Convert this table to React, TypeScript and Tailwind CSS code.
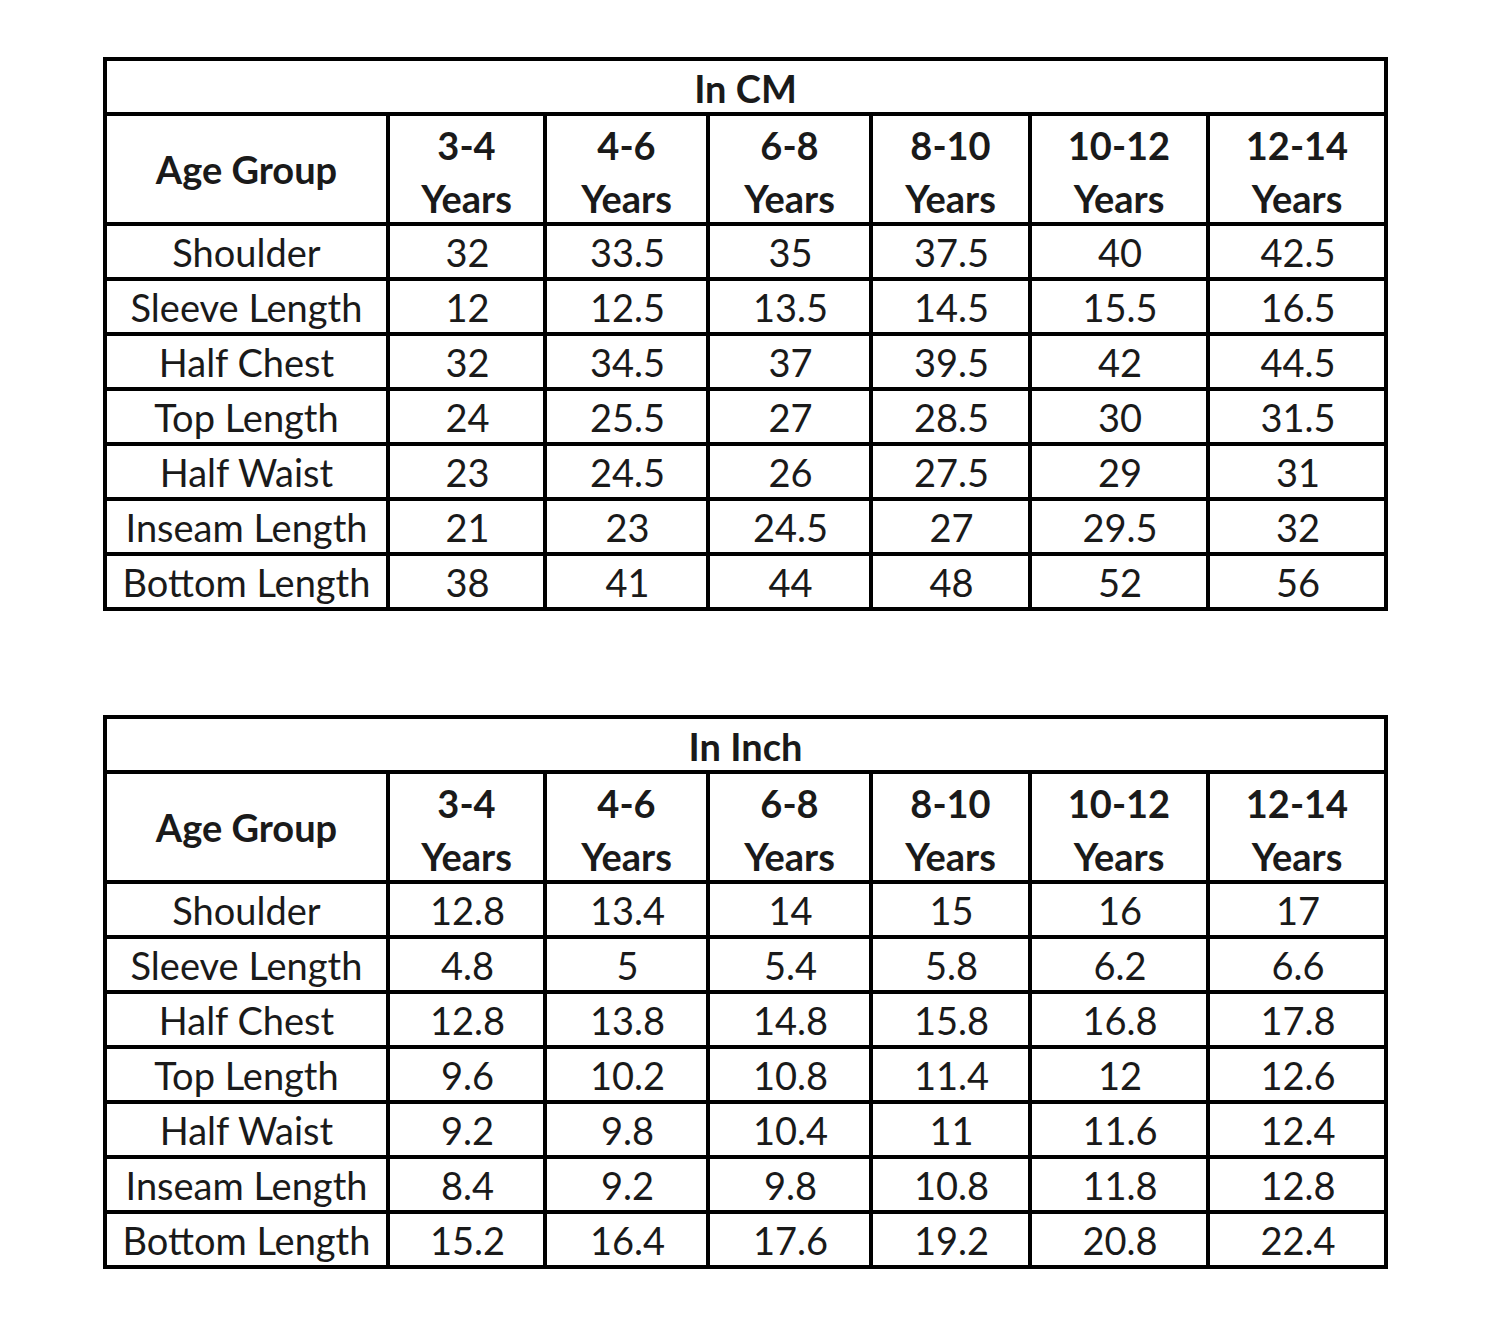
const ages = ["3-4", "4-6", "6-8", "8-10", "10-12", "12-14"];

type Row = { label: string; values: string[] };

const cmRows: Row[] = [
  { label: "Shoulder", values: ["32", "33.5", "35", "37.5", "40", "42.5"] },
  { label: "Sleeve Length", values: ["12", "12.5", "13.5", "14.5", "15.5", "16.5"] },
  { label: "Half Chest", values: ["32", "34.5", "37", "39.5", "42", "44.5"] },
  { label: "Top Length", values: ["24", "25.5", "27", "28.5", "30", "31.5"] },
  { label: "Half Waist", values: ["23", "24.5", "26", "27.5", "29", "31"] },
  { label: "Inseam Length", values: ["21", "23", "24.5", "27", "29.5", "32"] },
  { label: "Bottom Length", values: ["38", "41", "44", "48", "52", "56"] },
];

const inchRows: Row[] = [
  { label: "Shoulder", values: ["12.8", "13.4", "14", "15", "16", "17"] },
  { label: "Sleeve Length", values: ["4.8", "5", "5.4", "5.8", "6.2", "6.6"] },
  { label: "Half Chest", values: ["12.8", "13.8", "14.8", "15.8", "16.8", "17.8"] },
  { label: "Top Length", values: ["9.6", "10.2", "10.8", "11.4", "12", "12.6"] },
  { label: "Half Waist", values: ["9.2", "9.8", "10.4", "11", "11.6", "12.4"] },
  { label: "Inseam Length", values: ["8.4", "9.2", "9.8", "10.8", "11.8", "12.8"] },
  { label: "Bottom Length", values: ["15.2", "16.4", "17.6", "19.2", "20.8", "22.4"] },
];

function SizeTable({ title, rows }: { title: string; rows: Row[] }) {
  return (
    <div className="grid w-[1285px] grid-cols-[283px_157px_163px_163px_159px_178px_178px] border-l-4 border-t-4 border-black">
      <div className="col-span-7 flex h-[55px] items-center justify-center border-b-4 border-r-4 border-black pt-[3px] font-bold">
        {title}
      </div>

      {/* header */}
      <div className="flex h-[110px] items-center justify-center border-b-4 border-r-4 border-black font-bold">
        Age Group
      </div>
      {ages.map((a) => (
        <div
          key={a}
          className="flex h-[110px] flex-col items-center justify-center border-b-4 border-r-4 border-black pt-[6px] font-bold leading-[53px]"
        >
          <span>{a}</span>
          <span>Years</span>
        </div>
      ))}

      {rows.map((r) => (
        <div key={r.label} className="contents">
          <div className="flex h-[55px] items-center justify-center whitespace-nowrap border-b-4 border-r-4 border-black">
            {r.label}
          </div>
          {r.values.map((v, i) => (
            <div
              key={i}
              className="flex h-[55px] items-center justify-center border-b-4 border-r-4 border-black pl-[2px]"
            >
              {v}
            </div>
          ))}
        </div>
      ))}
    </div>
  );
}

export default function App() {
  return (
    <div className="min-h-[1333px] w-[1500px] bg-white pl-[103px] pt-[57px] font-['Lato',sans-serif] text-[38px] leading-none text-[#1a1a1a]">
      <div className="flex flex-col gap-[104px]">
        <SizeTable title="In CM" rows={cmRows} />
        <SizeTable title="In Inch" rows={inchRows} />
      </div>
    </div>
  );
}
